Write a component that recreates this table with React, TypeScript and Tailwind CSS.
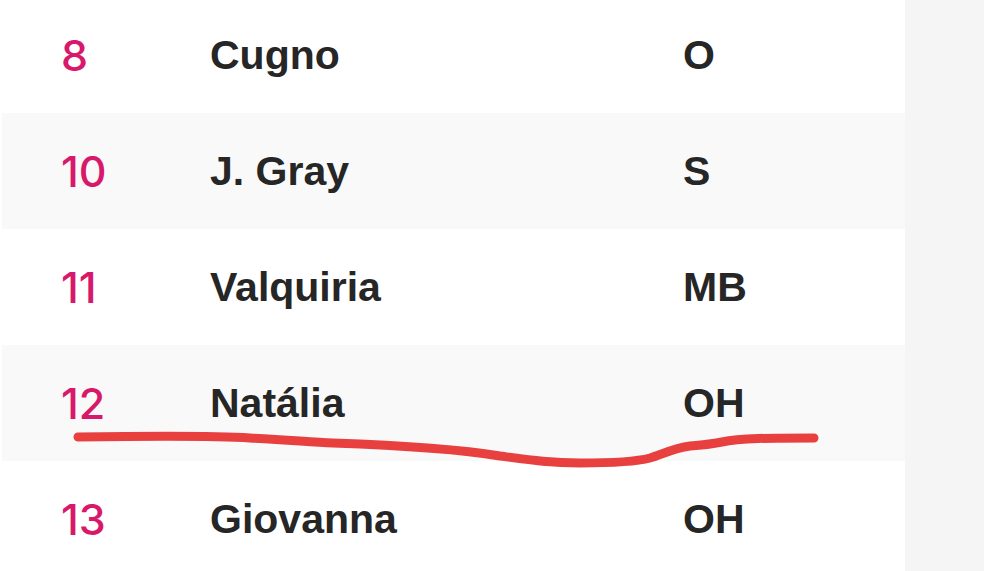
import React from "react";

const players = [
  { num: "8", name: "Cugno", pos: "O" },
  { num: "10", name: "J. Gray", pos: "S" },
  { num: "11", name: "Valquiria", pos: "MB" },
  { num: "12", name: "Natália", pos: "OH" },
  { num: "13", name: "Giovanna", pos: "OH" },
];

export default function App() {
  return (
    <div className="relative flex h-[571px] w-[984px] overflow-hidden bg-white">
      {/* Roster table */}
      <div className="-mt-[3px] w-[903px] ml-[2px]">
        {players.map((p, i) => (
          <div
            key={p.num}
            className={`flex h-[116px] items-center ${i % 2 === 1 ? "bg-[#f9f9f9]" : "bg-white"}`}
          >
            <span
              className="ml-[59px] w-[149px] text-[43px] leading-none text-[#d8186a]"
              style={{ fontFamily: "Inter, 'Noto Sans', sans-serif", fontWeight: 500 }}
            >
              {p.num}
            </span>
            <span
              className="w-[473px] text-[41px] font-bold leading-none text-[#262626]"
              style={{ fontFamily: "'Liberation Sans', Arial, sans-serif" }}
            >
              {p.name}
            </span>
            <span
              className="text-[41px] font-bold leading-none text-[#262626]"
              style={{ fontFamily: "'Liberation Sans', Arial, sans-serif" }}
            >
              {p.pos}
            </span>
          </div>
        ))}
      </div>
      {/* Side panel */}
      <div className="flex-1 bg-[#f5f5f5]" />

      {/* Hand-drawn highlight */}
      <svg
        className="pointer-events-none absolute left-0 top-0"
        width="984"
        height="571"
        viewBox="0 0 984 571"
      >
        <path
          d="M78 437 C 150 436, 220 436, 250 438 C 290 440, 310 442, 333 443 C 420 446, 470 451, 500 456 C 530 460, 550 463, 580 463 C 610 463, 635 462, 650 458 C 665 453, 675 448, 690 446 C 705 445, 712 444, 722 442 C 740 438, 770 438, 814 438"
          fill="none"
          stroke="#e8403f"
          strokeWidth="9"
          strokeLinecap="round"
          strokeLinejoin="round"
        />
      </svg>
    </div>
  );
}
